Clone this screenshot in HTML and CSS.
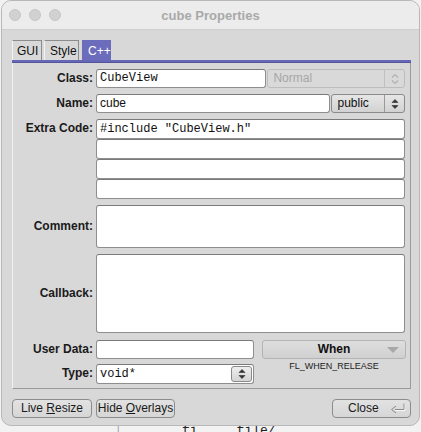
FILE: index.html
```html
<!DOCTYPE html>
<html>
<head>
<meta charset="utf-8">
<link rel="stylesheet" href="styles.css">
</head>
<body>
<div class="desk">
  <div class="window">
    <div class="titlebar">
      <div class="lights"><span class="light"></span><span class="light"></span><span class="light"></span></div>
      <div class="title">cube Properties</div>
    </div>
    <div class="content">
      <div class="tabs">
        <div class="tab">GUI</div>
        <div class="tab">Style</div>
        <div class="tab active">C++</div>
      </div>
      <div class="tabbar"></div>
      <div class="panel">
        <div class="row r-class">
          <label class="lbl">Class:</label>
          <div class="input mono w-class">CubeView</div>
          <div class="choice disabled w-normal"><span class="ctext">Normal</span><span class="spin"><svg width="8" height="12" viewBox="0 0 8 12"><path d="M1 4.5 L4 1.5 L7 4.5 M1 7.5 L4 10.5 L7 7.5" fill="none" stroke="#b0b0b0" stroke-width="1.2"/></svg></span></div>
        </div>
        <div class="row r-name">
          <label class="lbl">Name:</label>
          <div class="input w-name">cube</div>
          <div class="choice w-public"><span class="ctext">public</span><span class="spin"><svg width="8" height="12" viewBox="0 0 8 12"><path d="M1 4.5 L4 1.5 L7 4.5 Z M1 7.5 L4 10.5 L7 7.5 Z" fill="#333" stroke="#333" stroke-width="0.6"/></svg></span></div>
        </div>
        <div class="row r-extra">
          <label class="lbl">Extra Code:</label>
          <div class="stack">
            <div class="input mono tall">#include "CubeView.h"</div>
            <div class="input tall"></div>
            <div class="input tall"></div>
            <div class="input tall"></div>
          </div>
        </div>
        <div class="row r-comment center">
          <label class="lbl">Comment:</label>
          <div class="input area h-comment"></div>
        </div>
        <div class="row r-callback center">
          <label class="lbl">Callback:</label>
          <div class="input area h-callback"></div>
        </div>
        <div class="bottom">
          <div class="leftcol">
            <div class="row r-user">
              <label class="lbl">User Data:</label>
              <div class="input w-user"></div>
            </div>
            <div class="row r-type">
              <label class="lbl">Type:</label>
              <div class="input mono w-type"><span class="ttext">void*</span><span class="tspin"><svg width="8" height="12" viewBox="0 0 8 12"><path d="M1 4.5 L4 1.5 L7 4.5 Z M1 7.5 L4 10.5 L7 7.5 Z" fill="#333" stroke="#333" stroke-width="0.6"/></svg></span></div>
            </div>
          </div>
          <div class="rightcol">
            <div class="when"><span class="wtext">When</span><svg class="wtri" width="12" height="7" viewBox="0 0 12 7"><path d="M0 0 L12 0 L6 6 Z" fill="#a8a8a8"/></svg></div>
            <div class="caption">FL_WHEN_RELEASE</div>
          </div>
        </div>
      </div>
      <div class="buttons">
        <div class="btn b-live">Live <u>R</u>esize</div>
        <div class="btn b-hide">Hide <u>O</u>verlays</div>
        <div class="spacer"></div>
        <div class="btn b-close"><span class="closetxt">Close</span><svg class="ret" width="16" height="11" viewBox="0 0 16 11"><path d="M14.5 1 L14.5 7 L5 7" fill="none" stroke="#fff" stroke-width="1.4"/><path d="M14 0.5 L14 6.5 L5 6.5" fill="none" stroke="#8a8a8a" stroke-width="1"/><path d="M6 3 L1.5 6.5 L6 10" fill="none" stroke="#8a8a8a" stroke-width="1"/></svg></div>
      </div>
    </div>
  </div>
  <div class="behind"><span class="bmark">&#x2502;</span><span class="btxt">fi &nbsp; &nbsp; file/</span></div>
</div>
</body>
</html>
```
FILE: styles.css
```css
* { box-sizing: border-box; }
html, body { margin: 0; padding: 0; }
body {
  width: 421px;
  height: 432px;
  overflow: hidden;
  background: #f2f2f2;
  font-family: "Liberation Sans", Arial, sans-serif;
  font-size: 12px;
  color: #111;
}
.desk { position: relative; width: 421px; height: 432px; }
.window {
  width: 419px;
  height: 426px;
  margin-left: 1px;
  background: #d8d8d8;
  border-radius: 10px;
  overflow: hidden;
  border: 1px solid #b8b8b8;
  display: flex;
  flex-direction: column;
}
.titlebar {
  height: 29px;
  flex: none;
  background: #ececec;
  border-bottom: 1px solid #cfcfcf;
  display: flex;
  align-items: center;
  position: relative;
}
.lights { display: flex; gap: 8px; margin-left: 7px; }
.light {
  width: 12px; height: 12px; border-radius: 50%;
  background: #d1d1d1;
  border: 1px solid #c6c6c6;
}
.title {
  position: absolute;
  left: 0; right: 0; top: 7px;
  text-align: center;
  font-weight: bold;
  font-size: 13px;
  color: #a9a9a9;
}
.content {
  flex: 1;
  display: flex;
  flex-direction: column;
  padding: 10px 0 0 10px;
}
.tabs { display: flex; gap: 2px; height: 20px; }
.tab {
  height: 20px;
  padding: 0 5px;
  line-height: 20px;
  border: 1px solid #8c8c8c;
  border-bottom: none;
  border-left-color: #f2f2f2;
  background: #d8d8d8;
  color: #111;
  font-size: 12px;
}
.tab:first-child { width: 30px; padding: 0 4px; }
.tab:nth-child(2) { width: 35px; }
.tab.active {
  margin-left: 1px;
  width: 29px;
  background: #6c6cbd;
  color: #fff;
  border-color: #6c6cbd;
}
.tabbar {
  width: 399px;
  height: 3px;
  background: #6767b8;
  border-bottom: 1px solid #55559e;
}
.panel {
  width: 399px;
  border-left: 1px solid #f0f0f0;
  border-right: 1px solid #9a9a9a;
  border-bottom: 1px solid #9a9a9a;
  padding: 6px 5px 4px 0;
  display: flex;
  flex-direction: column;
}
.row { display: flex; align-items: flex-start; gap: 3px; }
.row.center { align-items: center; }
.lbl {
  width: 80px;
  flex: none;
  text-align: right;
  font-weight: bold;
  font-size: 12px;
  color: #1a1a1a;
  line-height: 19px;
}
.input {
  background: #fff;
  border: 1px solid #8e8e8e;
  border-top-color: #7a7a7a;
  border-radius: 3px;
  height: 19px;
  line-height: 17px;
  padding: 0 3px;
  font-size: 12px;
  color: #111;
  white-space: pre;
}
.mono { font-family: "Liberation Mono", "Courier New", monospace; font-size: 12px; }
.r-class { height: 19px; }
.w-class { width: 171px; }
.choice {
  height: 19px;
  border: 1px solid #8a8a8a;
  border-radius: 3px;
  background: linear-gradient(#e6e6e6, #d2d2d2);
  display: flex;
  align-items: stretch;
  margin-left: -2px;
}
.choice .ctext { flex: 1; padding-left: 5px; line-height: 17px; }
.choice .spin {
  width: 20px;
  border-left: 1px solid #9a9a9a;
  display: flex; align-items: center; justify-content: center;
}
.choice.disabled { background: #d9d9d9; border-color: #bdbdbd; color: #a6a6a6; }
.choice.disabled .spin { border-left-color: #c0c0c0; }
.w-normal { width: 138px; margin-left: -2px; }
.r-name { margin-top: 6px; height: 19px; }
.w-name { width: 236px; }
.w-public { width: 74px; margin-left: -2px; }
.r-extra { margin-top: 6px; }
.stack { flex: 1; display: flex; flex-direction: column; }
.input.tall { height: 20px; line-height: 18px; }
.r-comment { margin-top: 6px; }
.area { flex: 1; }
.h-comment { height: 43px; }
.r-callback { margin-top: 6px; }
.h-callback { height: 79px; }
.bottom { display: flex; margin-top: 7px; }
.leftcol { display: flex; flex-direction: column; }
.w-user { width: 158px; height: 19px; }
.r-type { margin-top: 5px; }
.w-type {
  width: 158px; height: 20px;
  display: flex; align-items: center; padding-right: 0;
}
.ttext { flex: 1; }
.tspin {
  width: 21px; height: 16px;
  border: 1px solid #8a8a8a;
  border-radius: 3px;
  background: linear-gradient(#eeeeee, #d4d4d4);
  display: flex; align-items: center; justify-content: center;
  margin-right: 1px;
}
.rightcol { display: flex; flex-direction: column; margin-left: 8px; }
.when {
  width: 144px; height: 19px;
  border: 1px solid #b4b4b4;
  border-radius: 3px;
  background: linear-gradient(#dedede, #d0d0d0);
  position: relative;
  text-align: center;
  font-weight: bold;
  line-height: 17px;
}
.wtri { position: absolute; right: 6px; top: 6px; }
.caption {
  text-align: center;
  font-size: 9px;
  color: #222;
  margin-top: 2px;
  width: 144px;
}
.buttons { display: flex; margin-top: 10px; height: 19px; }
.btn {
  height: 19px;
  border: 1px solid #8c8c8c;
  border-radius: 4px;
  background: linear-gradient(#e2e2e2, #d6d6d6);
  text-align: center;
  line-height: 17px;
  font-size: 12px;
  color: #1a1a1a;
}
.b-live { width: 80px; }
.b-hide { width: 79px; margin-left: 4px; }
.spacer { flex: 1; }
.b-close {
  width: 79px; margin-right: 8px;
  display: flex; align-items: center; position: relative;
}
.closetxt { margin-left: 15px; }
.ret { position: absolute; right: 4px; top: 3px; }
.behind {
  position: absolute;
  left: 0; top: 426px;
  width: 421px; height: 6px;
  overflow: hidden;
  font-family: "Liberation Mono", monospace;
  font-size: 12px;
  color: #222;
  white-space: pre;
}
.bmark { position: absolute; left: 115px; top: -2px; color: #888; font-size: 10px; }
.btxt { position: absolute; left: 182px; top: -3px; font-size: 13px; }
```
